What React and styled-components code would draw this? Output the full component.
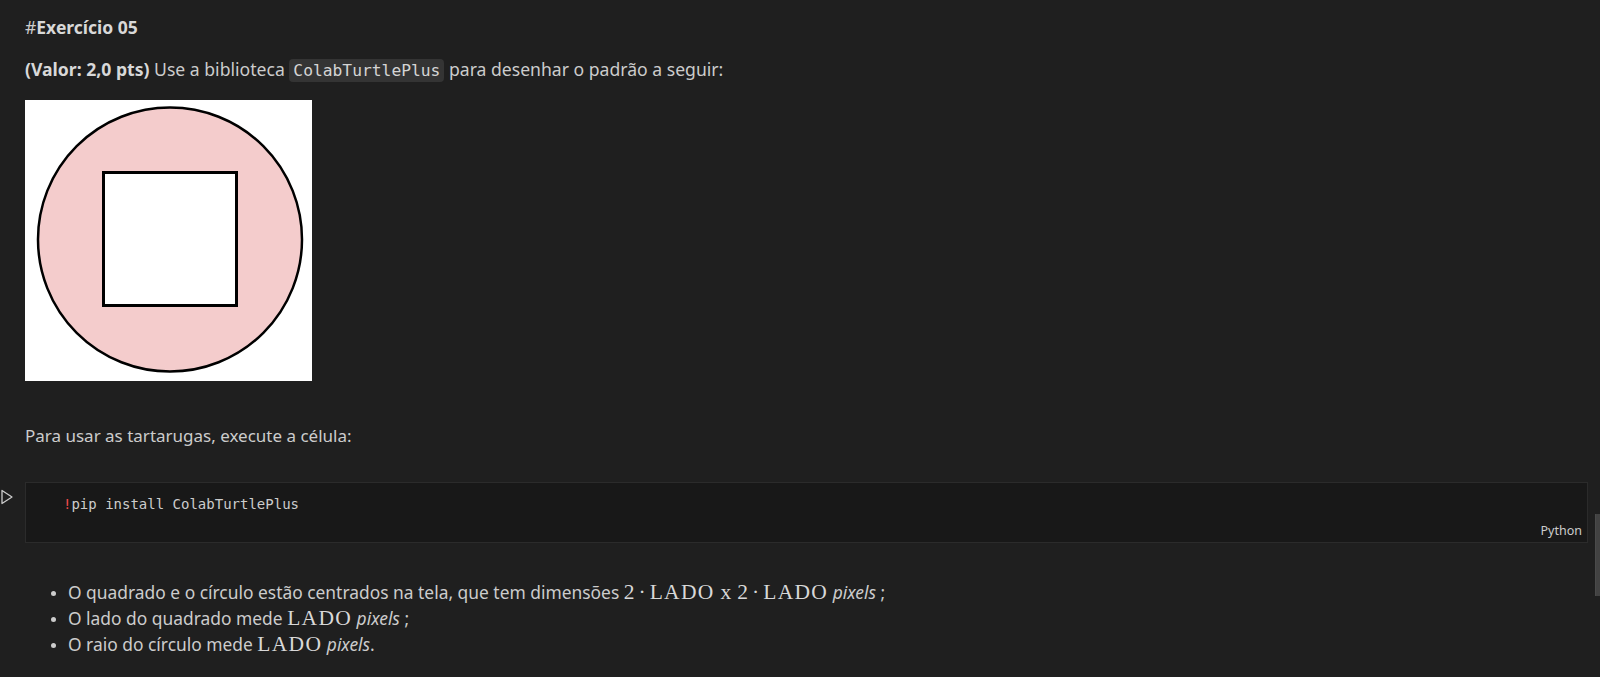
import React from 'react';
import styled, { createGlobalStyle } from 'styled-components';

const GlobalStyle = createGlobalStyle`
  html, body {
    margin: 0;
    padding: 0;
    background: #1f1f1f;
    height: 100%;
  }
  body {
    font-family: "Noto Sans", "Open Sans", sans-serif;
    color: #cccccc;
    overflow: hidden;
  }
`;

const Notebook = styled.main`
  position: relative;
  height: 677px;
  padding: 15px 12px 0 0;
  box-sizing: border-box;
`;

const Row = styled.section`
  display: grid;
  grid-template-columns: 25px 1fr;
  margin-top: ${(p) => p.$gap || 0}px;
`;

const Gutter = styled.div`
  display: flex;
  justify-content: flex-start;
  padding-top: ${(p) => p.$top || 0}px;
`;

const Markdown = styled.div`
  font-size: ${(p) => p.$size || 17.4}px;
  line-height: 24px;
`;

const Heading = styled.p`
  margin: 0;
  font-size: 17.5px;
  b { font-weight: 700; color: #d8d8d8; }
`;

const Para = styled.p`
  margin: 0;
  b { font-weight: 700; color: #d8d8d8; }
`;

const InlineCode = styled.code`
  font-family: "DejaVu Sans Mono", "Liberation Mono", monospace;
  font-size: 16.3px;
  background: #343434;
  border-radius: 4px;
  padding: 2px 4px;
  color: #d4d4d4;
`;

const Figure = styled.svg`
  display: block;
  width: 287px;
  height: 281px;
`;

const CodeCell = styled.div`
  position: relative;
  height: 61px;
  box-sizing: border-box;
  background: #181818;
  border: 1px solid #2b2b2b;
  padding: 12px 0 0 37px;
`;

const CodeLine = styled.pre`
  margin: 0;
  font-family: "DejaVu Sans Mono", "Liberation Mono", monospace;
  font-size: 14px;
  line-height: 19px;
  color: #cccccc;
  span { color: #f14c4c; }
`;

const LangLabel = styled.span`
  position: absolute;
  right: 5px;
  bottom: 3px;
  font-size: 12.5px;
  color: #cccccc;
`;

const List = styled.ul`
  margin: 0;
  padding-left: 43px;
  list-style: disc;
  li { line-height: 26px; }
  li::marker { font-size: 14px; }
`;

const Math = styled.span`
  font-family: "Liberation Serif", "DejaVu Serif", serif;
  font-size: 21.5px;
  color: #d8d8d8;
`;

const Ident = styled.span`
  letter-spacing: 1.3px;
`;

const Op = styled.span`
  margin: 0 ${(p) => p.$space || 4}px;
`;

const Em = styled.i`
  font-style: italic;
`;

const Scrollbar = styled.div`
  position: absolute;
  right: 0;
  top: 514px;
  width: 4px;
  height: 82px;
  background: #424242;
  border-left: 1px solid #4a4a4a;
`;

function RunIcon() {
  return (
    <svg width="14" height="16" viewBox="0 0 14 16">
      <path d="M2 1.5 L12 8 L2 14.5 Z" fill="none" stroke="#cccccc" strokeWidth="1.3" strokeLinejoin="round" />
    </svg>
  );
}

function Lado() {
  return <Ident>LADO</Ident>;
}

export default function App() {
  return (
    <>
      <GlobalStyle />
      <Notebook>
        <Row>
          <div />
          <Markdown>
            <Heading>#<b>Exercício 05</b></Heading>
          </Markdown>
        </Row>

        <Row $gap={18}>
          <div />
          <Markdown $size={17.6}>
            <Para>
              <b>(Valor: 2,0 pts)</b> Use a biblioteca <InlineCode>ColabTurtlePlus</InlineCode> para desenhar o padrão a seguir:
            </Para>
          </Markdown>
        </Row>

        <Row $gap={17}>
          <div />
          <Figure viewBox="0 0 287 281">
            <rect x="0" y="0" width="287" height="281" fill="#ffffff" />
            <circle cx="145" cy="139.5" r="132" fill="#f4cccc" stroke="#000" strokeWidth="2.5" />
            <rect x="78.5" y="72.5" width="133" height="133" fill="#ffffff" stroke="#000" strokeWidth="3" />
          </Figure>
        </Row>

        <Row $gap={43}>
          <div />
          <Markdown $size={17}>
            <Para>Para usar as tartarugas, execute a célula:</Para>
          </Markdown>
        </Row>

        <Row $gap={34}>
          <Gutter $top={7}><RunIcon /></Gutter>
          <CodeCell>
            <CodeLine><span>!</span>pip install ColabTurtlePlus</CodeLine>
            <LangLabel>Python</LangLabel>
          </CodeCell>
        </Row>

        <Row $gap={36}>
          <div />
          <Markdown>
            <List>
              <li>
                O quadrado e o círculo estão centrados na tela, que tem dimensões{' '}
                <Math>2<Op>·</Op><Lado /><Op $space={6}>x</Op>2<Op>·</Op><Lado /></Math> <Em>pixels</Em> ;
              </li>
              <li>
                O lado do quadrado mede <Math><Lado /></Math> <Em>pixels</Em> ;
              </li>
              <li>
                O raio do círculo mede <Math><Lado /></Math> <Em>pixels</Em>.
              </li>
            </List>
          </Markdown>
        </Row>

        <Scrollbar />
      </Notebook>
    </>
  );
}
